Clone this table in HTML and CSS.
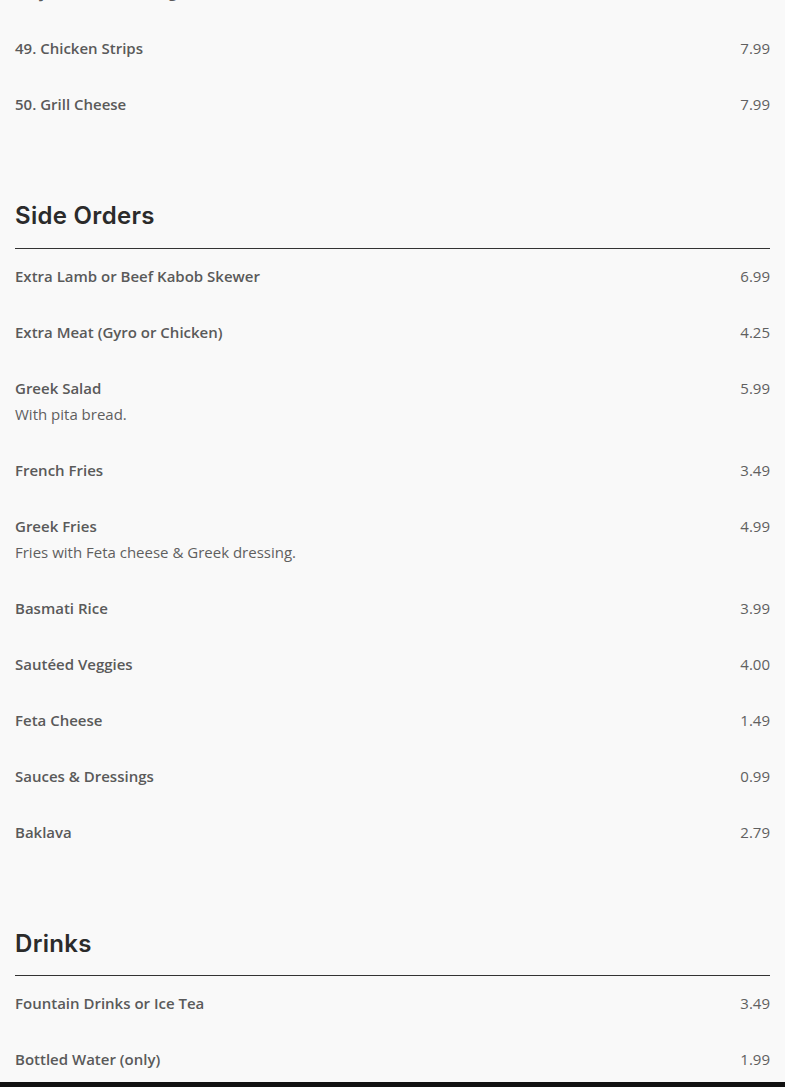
FILE: index.html
```html
<!DOCTYPE html>
<html lang="en">
<head>
<meta charset="utf-8">
<title>Menu</title>
<link rel="stylesheet" href="styles.css">
</head>
<body>
<main class="menu">
  <section class="section section-first">
    <div class="item"><div class="item-info"><div class="item-name">48. Jumbo Cheeseburger</div></div><div class="item-price">7.99</div></div>
    <div class="item"><div class="item-info"><div class="item-name">49. Chicken Strips</div></div><div class="item-price">7.99</div></div>
    <div class="item"><div class="item-info"><div class="item-name">50. Grill Cheese</div></div><div class="item-price">7.99</div></div>
  </section>

  <section class="section">
    <h2 class="section-title">Side Orders</h2>
    <div class="item"><div class="item-info"><div class="item-name">Extra Lamb or Beef Kabob Skewer</div></div><div class="item-price">6.99</div></div>
    <div class="item"><div class="item-info"><div class="item-name">Extra Meat (Gyro or Chicken)</div></div><div class="item-price">4.25</div></div>
    <div class="item"><div class="item-info"><div class="item-name">Greek Salad</div><div class="item-desc">With pita bread.</div></div><div class="item-price">5.99</div></div>
    <div class="item"><div class="item-info"><div class="item-name">French Fries</div></div><div class="item-price">3.49</div></div>
    <div class="item"><div class="item-info"><div class="item-name">Greek Fries</div><div class="item-desc">Fries with Feta cheese &amp; Greek dressing.</div></div><div class="item-price">4.99</div></div>
    <div class="item"><div class="item-info"><div class="item-name">Basmati Rice</div></div><div class="item-price">3.99</div></div>
    <div class="item"><div class="item-info"><div class="item-name">Sautéed Veggies</div></div><div class="item-price">4.00</div></div>
    <div class="item"><div class="item-info"><div class="item-name">Feta Cheese</div></div><div class="item-price">1.49</div></div>
    <div class="item"><div class="item-info"><div class="item-name">Sauces &amp; Dressings</div></div><div class="item-price">0.99</div></div>
    <div class="item"><div class="item-info"><div class="item-name">Baklava</div></div><div class="item-price">2.79</div></div>
  </section>

  <section class="section">
    <h2 class="section-title">Drinks</h2>
    <div class="item"><div class="item-info"><div class="item-name">Fountain Drinks or Ice Tea</div></div><div class="item-price">3.49</div></div>
    <div class="item"><div class="item-info"><div class="item-name">Bottled Water (only)</div></div><div class="item-price">1.99</div></div>
    <div class="item"><div class="item-info"><div class="item-name">Canned Soda</div></div><div class="item-price">1.49</div></div>
  </section>
</main>
<div class="bottom-bar"></div>
</body>
</html>
```

FILE: styles.css
```css
html, body {
  margin: 0;
  padding: 0;
  background: #f9f9f9;
  overflow: hidden;
}
body {
  font-family: "Open Sans", "Liberation Sans", sans-serif;
  color: #555;
}
.menu {
  padding: 0 15px;
  margin-top: -21px;
}
.section + .section {
  margin-top: 84px;
}
.section-title {
  margin: 0 0 14px;
  padding-bottom: 17.5px;
  border-bottom: 1px solid #333;
  font-family: Inter, "Noto Sans", sans-serif;
  font-weight: 600;
  font-size: 24px;
  letter-spacing: 0.3px;
  line-height: 29px;
  color: #2b2b2b;
}
.item {
  display: flex;
  justify-content: space-between;
  align-items: flex-start;
  margin-bottom: 30px;
  font-size: 15px;
  line-height: 26px;
}
.item-name {
  font-weight: 600;
  color: #5a5a5a;
}
.item-desc {
  font-weight: 400;
  color: #5f5f5f;
}
.item-price {
  font-weight: 400;
  color: #606060;
}
.bottom-bar {
  position: fixed;
  left: 0;
  right: 0;
  bottom: 0;
  height: 5px;
  background: #111;
}
```
